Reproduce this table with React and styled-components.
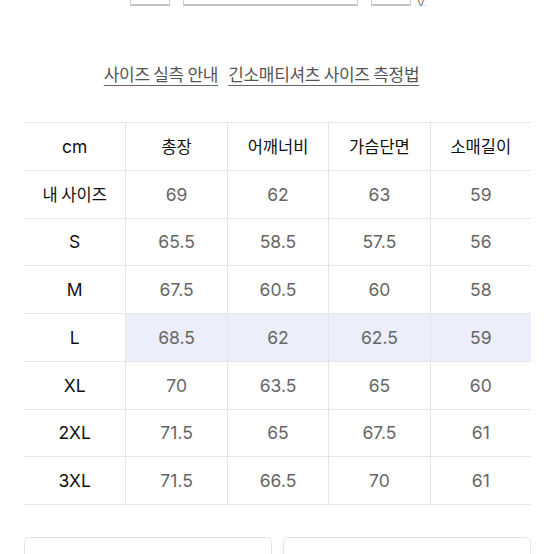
import React from "react";
import styled, { createGlobalStyle } from "styled-components";

const Global = createGlobalStyle`
  html, body { margin: 0; padding: 0; background: #fff; }
  body { font-family: "Inter", "Noto Sans CJK KR", sans-serif; overflow: hidden; }
`;

const Page = styled.div`
  padding: 0 23px 0 24px;
  height: 554px;
  overflow: hidden;
`;

const TopStrip = styled.div`
  height: 6px;
  overflow: hidden;
  display: flex;
  justify-content: center;
  align-items: flex-end;
  gap: 13px;
  margin-left: 2px;
`;

const Tofu = styled.span`
  display: block;
  width: ${(p) => p.$w}px;
  height: 14px;
  border: 1px solid #cfcfcf;
  border-bottom: 2px solid #c4c4c4;
  box-sizing: border-box;
`;

const Tail = styled.span`
  font-size: 12px;
  line-height: 6px;
  color: #777;
  margin-left: -10px;
`;

const Links = styled.div`
  display: flex;
  justify-content: center;
  gap: 10px;
  margin-top: 58px;
  padding-right: 32px;
`;

const Link = styled.a`
  font-family: "Noto Sans CJK KR", sans-serif;
  font-size: 17px;
  line-height: 20px;
  color: #555;
  text-decoration: underline;
  text-decoration-color: #666;
  text-underline-offset: 4px;
  letter-spacing: -0.3px;
`;

const Table = styled.div`
  margin-top: 38px;
  display: grid;
  grid-template-columns: repeat(5, 1fr);
  border-top: 1px solid #e6e6e6;
  width: 507px;
`;

const Cell = styled.div`
  height: 46.75px;
  display: flex;
  align-items: center;
  justify-content: center;
  border-bottom: 1px solid #e6e6e6;
  border-left: ${(p) => (p.$first ? "none" : "1px solid #e6e6e6")};
  background: ${(p) => (p.$hl ? "#eceefb" : "transparent")};
  color: ${(p) => (p.$dark ? "#111" : "#666")};
  font-size: ${(p) => (p.$ko ? "16.5px" : "17.5px")};
  font-family: ${(p) => (p.$ko ? '"Noto Sans CJK KR", sans-serif' : '"Inter", "Noto Sans CJK KR", sans-serif')};
`;

const Buttons = styled.div`
  display: grid;
  grid-template-columns: 1fr 1fr;
  gap: 11px;
  margin-top: 32px;
  width: 507px;
`;

const Btn = styled.div`
  height: 50px;
  border: 1px solid #e4e4e4;
  border-radius: 6px;
  display: flex;
  align-items: center;
  justify-content: center;
  font-family: "Noto Sans CJK KR", sans-serif;
  font-size: 15px;
  color: #999;
  padding-top: 14px;
`;

const header = ["cm", "총장", "어깨너비", "가슴단면", "소매길이"];
const rows = [
  ["내 사이즈", "69", "62", "63", "59"],
  ["S", "65.5", "58.5", "57.5", "56"],
  ["M", "67.5", "60.5", "60", "58"],
  ["L", "68.5", "62", "62.5", "59"],
  ["XL", "70", "63.5", "65", "60"],
  ["2XL", "71.5", "65", "67.5", "61"],
  ["3XL", "71.5", "66.5", "70", "61"],
];

export default function App() {
  return (
    <Page>
      <Global />
      <TopStrip>
        <Tofu $w={40} />
        <Tofu $w={175} />
        <Tofu $w={40} />
        <Tail>.y.</Tail>
      </TopStrip>
      <Links>
        <Link>사이즈 실측 안내</Link>
        <Link>긴소매티셔츠 사이즈 측정법</Link>
      </Links>
      <Table>
        {header.map((h, i) => (
          <Cell key={h} $first={i === 0} $dark $ko={i !== 0}>
            {h}
          </Cell>
        ))}
        {rows.map((r) =>
          r.map((v, i) => (
            <Cell
              key={r[0] + i}
              $first={i === 0}
              $dark={i === 0}
              $ko={r[0] === "내 사이즈" && i === 0}
              $hl={r[0] === "L" && i > 0}
            >
              {v}
            </Cell>
          ))
        )}
      </Table>
      <Buttons>
        <Btn>사이즈 추천 받기</Btn>
        <Btn>사이즈 비교하기</Btn>
      </Buttons>
    </Page>
  );
}
